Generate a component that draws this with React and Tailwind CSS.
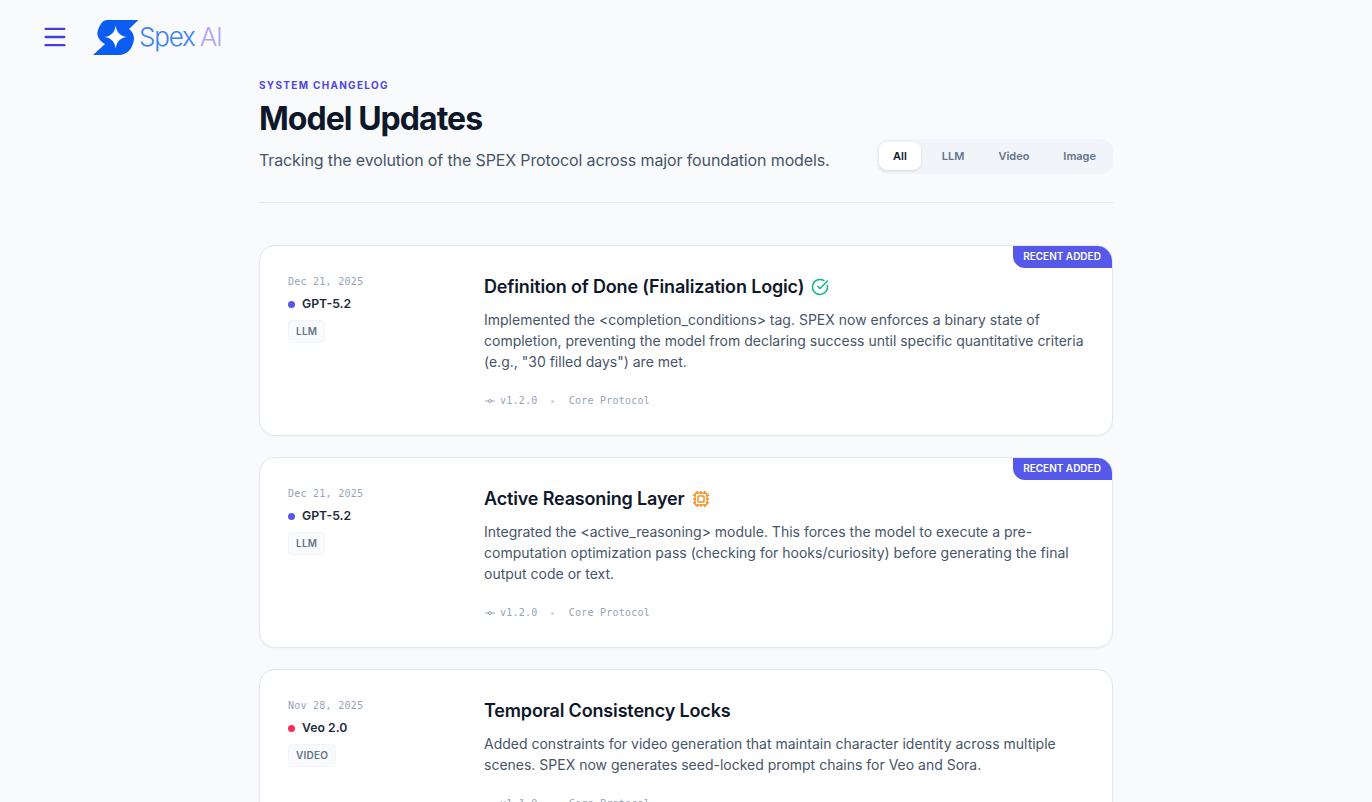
import React from "react";
import { Menu, CircleCheckBig, Cpu, GitCommitHorizontal } from "lucide-react";

const inter = "font-['Inter',sans-serif]";
const mono = "font-['DejaVu_Sans_Mono',monospace]";

function Logo() {
  return (
    <div className="flex items-center">
      <svg width="46" height="35" viewBox="0 0 46 35" className="shrink-0">
        <path d="M14 0H45.5L36 9C40 12 42 17 40.5 22C38.5 30 33 35 26 35H0L12 24C6 21 3 15 5 10C7 4 10 0 14 0Z" fill="#0b5cf0" />
        <path d="M22.7 5.5C23.6 12.2 26.8 15.8 33.6 17C26.8 18.2 23.6 21.8 22.7 28.5C21.8 21.8 18.6 18.2 11.8 17C18.6 15.8 21.8 12.2 22.7 5.5Z" fill="#ffffff" />
      </svg>
      <span className={`${inter} flex gap-[5px] text-[26px] font-light tracking-[-0.045em] leading-none text-[#3b82f6]`}>
        <span>Spex</span>
        <span className="text-[#b0a5f9]">AI</span>
      </span>
    </div>
  );
}

function Card({ date, dot, model, tag, title, icon, body, recent, version }) {
  return (
    <div className="relative bg-white border border-[#e2e8f0] rounded-2xl pt-[28px] px-[28px] pb-[27px] flex shadow-[0_1px_2px_rgba(15,23,42,0.04)] shrink-0 overflow-hidden">
      {recent && (
        <div className={`${inter} absolute top-0 right-0 h-[22px] w-[99px] pb-[1px] pr-[1px] flex items-center justify-center bg-[#5558e8] text-white text-[10px] font-semibold rounded-bl-xl`}>
          RECENT ADDED
        </div>
      )}
      <div className="w-[196px] shrink-0">
        <div className={`${mono} text-[10px] leading-[14px] tracking-[0.025em] text-[#94a3b8] mt-[1px]`}>{date}</div>
        <div className="flex items-center gap-[7px] mt-[7px]">
          <span className={`w-[7px] h-[7px] rounded-full ${dot}`} />
          <span className={`${inter} text-[12.25px] leading-[16px] font-semibold text-[#1e293b]`}>{model}</span>
        </div>
        <div className={`${inter} inline-flex items-center h-[23px] mt-[8px] px-[7px] text-[10px] tracking-[0.025em] font-semibold text-[#64748b] bg-[#f8fafc] border border-[#f1f5f9] rounded`}>
          {tag}
        </div>
      </div>
      <div className="flex-1 min-w-0">
        <div className="flex items-center gap-[7px] h-[26px]">
          <h2 className={`${inter} text-[18px] leading-[26px] font-semibold tracking-[-0.009em] text-[#0f172a]`}>{title}</h2>
          {icon}
        </div>
        <p className={`${inter} mt-[9px] text-[14px] leading-[21px] text-[#475569] max-w-[604px]`}>{body}</p>
        <div className={`${mono} flex items-center mt-[22px] text-[10px] leading-[14px] tracking-[0.025em] text-[#94a3b8]`}>
          <GitCommitHorizontal size={12} strokeWidth={2} className="mr-[4px] -mt-[1px]" />
          <span>{version}</span>
          <span className="w-[3px] h-[3px] rounded-full bg-[#cbd5e1] ml-[13px] mr-[15px]" />
          <span>Core Protocol</span>
        </div>
      </div>
    </div>
  );
}

export default function App() {
  return (
    <div className={`${inter} h-screen overflow-hidden bg-[#f8fafc]`}>
      <header className="flex items-center h-[75px] pl-[41px] pb-[1px]">
        <Menu size={28} strokeWidth={2} className="text-[#433fd8]" />
        <div className="ml-[24px]"><Logo /></div>
      </header>
      <main className="w-[854px] mx-auto">
        <div className="flex items-end justify-between pb-[28px] border-b border-[#e2e8f0]">
          <div className="pb-[2px]">
            <div className="text-[10px] leading-[16px] mt-[2px] font-bold tracking-[0.13em] text-[#4f46e5]">SYSTEM CHANGELOG</div>
            <h1 className="text-[32px] leading-[40px] mt-[6px] font-bold tracking-[-0.03em] text-[#0f172a]">Model Updates</h1>
            <p className="text-[16px] leading-[24px] mt-[9px] tracking-[-0.008em] text-[#475569]">Tracking the evolution of the SPEX Protocol across major foundation models.</p>
          </div>
          <div className="flex items-center h-[35px] pl-[3px] pr-[3px] pb-[1px] gap-[6px] bg-[#f1f5f9] rounded-xl">
            <button className="h-[28px] px-[14px] mr-[1px] text-[11px] font-semibold text-[#0f172a] bg-white rounded-lg shadow-sm">All</button>
            <button className="h-[28px] px-[14px] text-[11px] font-semibold text-[#64748b]">LLM</button>
            <button className="h-[28px] px-[14px] text-[11px] font-semibold text-[#64748b]">Video</button>
            <button className="h-[28px] px-[14px] text-[11px] font-semibold text-[#64748b]">Image</button>
          </div>
        </div>
        <div className="flex flex-col gap-[21px] mt-[42px]">
          <Card
            recent
            date="Dec 21, 2025"
            dot="bg-[#5558e8]"
            model="GPT-5.2"
            tag="LLM"
            title="Definition of Done (Finalization Logic)"
            icon={<CircleCheckBig size={18} strokeWidth={2} className="text-[#10b981]" />}
            body={'Implemented the <completion_conditions> tag. SPEX now enforces a binary state of completion, preventing the model from declaring success until specific quantitative criteria (e.g., "30 filled days") are met.'}
            version="v1.2.0"
          />
          <Card
            recent
            date="Dec 21, 2025"
            dot="bg-[#5558e8]"
            model="GPT-5.2"
            tag="LLM"
            title="Active Reasoning Layer"
            icon={<Cpu size={18} strokeWidth={2} className="text-[#f78f1e]" />}
            body="Integrated the <active_reasoning> module. This forces the model to execute a pre-computation optimization pass (checking for hooks/curiosity) before generating the final output code or text."
            version="v1.2.0"
          />
          <Card
            date="Nov 28, 2025"
            dot="bg-[#ff2d55]"
            model="Veo 2.0"
            tag="VIDEO"
            title="Temporal Consistency Locks"
            body="Added constraints for video generation that maintain character identity across multiple scenes. SPEX now generates seed-locked prompt chains for Veo and Sora."
            version="v1.1.0"
          />
        </div>
      </main>
    </div>
  );
}
